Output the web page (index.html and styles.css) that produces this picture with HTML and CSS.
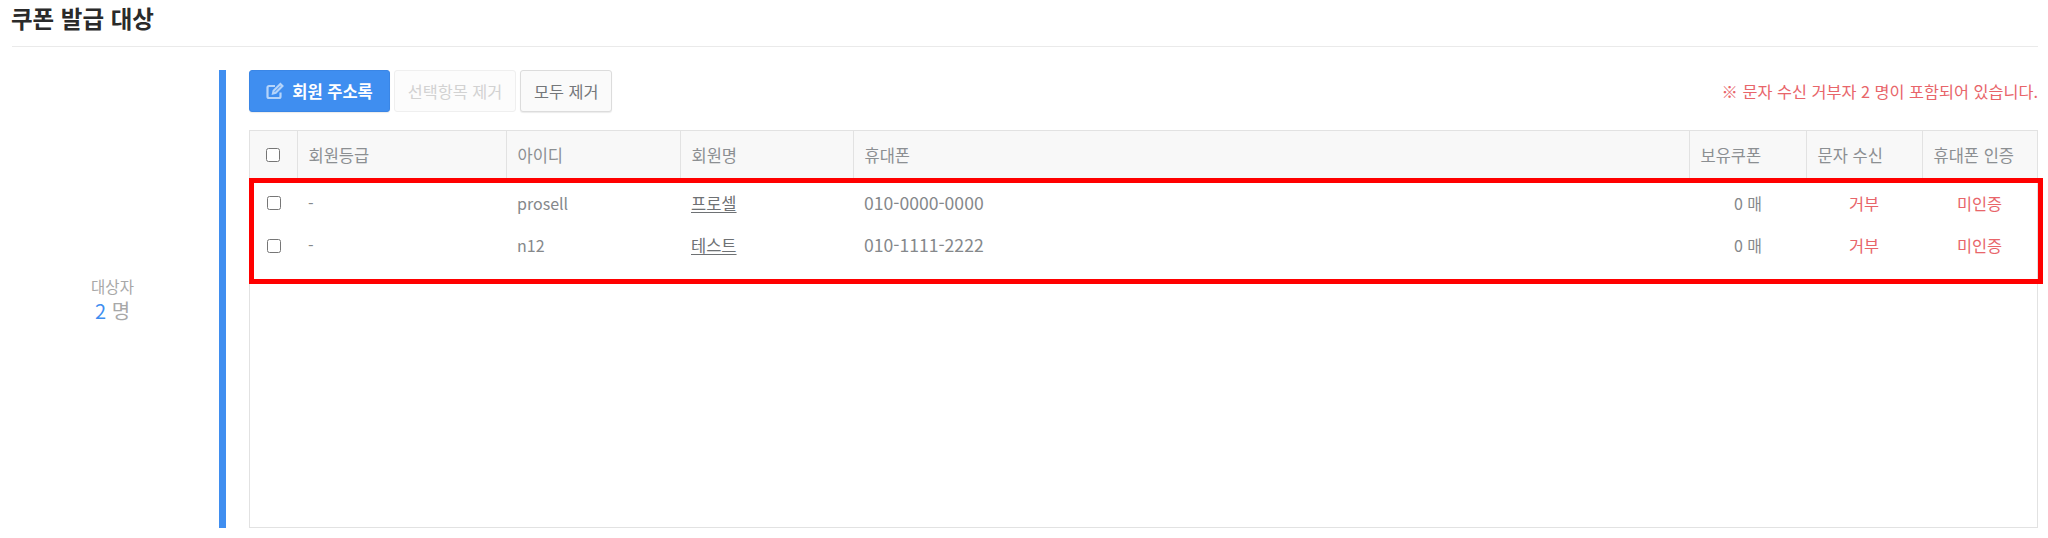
FILE: index.html
```html
<!DOCTYPE html>
<html lang="ko">
<head>
  <meta charset="UTF-8" />
  <title>쿠폰 발급 대상</title>
  <link rel="stylesheet" href="styles.css">
</head>
<body>
  <h2 class="section-title">쿠폰 발급 대상</h2>

  <section class="target">
    <div class="target-label">
      <div>대상자</div>
      <div class="target-count"><em>2</em> 명</div>
    </div>

    <div class="target-body">
      <div class="toolbar">
        <button class="btn btn-primary" type="button">
          <svg class="btn-icon" viewBox="0 0 18 18" width="18" height="18" fill="none" stroke="currentColor" stroke-width="2.2">
            <path d="M14.5 10.5v4a1.5 1.5 0 0 1-1.5 1.5H3a1.5 1.5 0 0 1-1.5-1.5v-9A1.5 1.5 0 0 1 3 4h6" />
            <path d="M7 11.5l.6-2.8L14.4 2l2 2-6.7 6.8z" />
          </svg>
          회원 주소록
        </button>
        <button class="btn btn-disabled" type="button">선택항목 제거</button>
        <button class="btn" type="button">모두 제거</button>
        <p class="notice">※ 문자 수신 거부자 2 명이 포함되어 있습니다.</p>
      </div>

      <div class="table-wrap">
        <table class="member-table">
          <colgroup>
            <col class="col-check" />
            <col class="col-grade" />
            <col class="col-id" />
            <col class="col-name" />
            <col />
            <col class="col-coupon" />
            <col class="col-sms" />
            <col class="col-auth" />
          </colgroup>
          <thead>
            <tr>
              <th class="check-cell"><input type="checkbox" /></th>
              <th>회원등급</th>
              <th>아이디</th>
              <th>회원명</th>
              <th>휴대폰</th>
              <th>보유쿠폰</th>
              <th>문자 수신</th>
              <th>휴대폰 인증</th>
            </tr>
          </thead>
          <tbody>
            <tr>
              <td class="check-cell"><input type="checkbox" /></td>
              <td>-</td>
              <td>prosell</td>
              <td><a href="#">프로셀</a></td>
              <td class="phone">010-0000-0000</td>
              <td class="coupon">0 매</td>
              <td class="status">거부</td>
              <td class="status">미인증</td>
            </tr>
            <tr>
              <td class="check-cell"><input type="checkbox" /></td>
              <td>-</td>
              <td>n12</td>
              <td><a href="#">테스트</a></td>
              <td class="phone">010-1111-2222</td>
              <td class="coupon">0 매</td>
              <td class="status">거부</td>
              <td class="status">미인증</td>
            </tr>
          </tbody>
        </table>
        <!-- annotation box drawn over the rows -->
        <div class="highlight"></div>
      </div>
    </div>
  </section>
</body>
</html>
```

FILE: styles.css
```css
:root {
  --accent-blue: #3f8ef0;
  --line: #e2e2e2;
  --text-gray: #85888b;
  --notice-red: #e8656a;
}

* {
  box-sizing: border-box;
  margin: 0;
  padding: 0;
}

body {
  font-family: "Noto Sans CJK KR", "Noto Sans", sans-serif;
  font-size: 16px;
  color: var(--text-gray);
  background-color: #fff;
  height: 538px;
  overflow: hidden;
  padding: 0 10px 0 12px;
}

.section-title {
  height: 47px;
  padding-top: 2px;
  text-indent: -1px;
  font-size: 23.5px;
  line-height: 32px;
  font-weight: 700;
  color: #2a2a2a;
  border-bottom: 1px solid #eaeaea;
}

.target {
  display: flex;
  height: 458px;
  margin-top: 23px;
}

/* Left column with the count */
.target-label {
  width: 207px;
  display: flex;
  flex-direction: column;
  justify-content: center;
  align-items: center;
  padding: 2px 6px 0 0;
  color: #a8a8a8;
  font-size: 15.5px;
  line-height: 22px;
}

.target-count {
  font-size: 20px;
  line-height: 28px;
}

.target-count em {
  font-style: normal;
  color: var(--accent-blue);
}

.target-body {
  flex: 1;
  display: flex;
  flex-direction: column;
  border-left: 7px solid var(--accent-blue);
  padding-left: 23px;
}

.toolbar {
  display: flex;
  align-items: center;
  gap: 4px;
  height: 42px;
  margin-bottom: 18px;
}

.btn {
  height: 42px;
  padding: 0 13px;
  font-family: inherit;
  font-size: 16.3px;
  color: #74777a;
  background-color: #fafafa;
  border: 1px solid #dcdcdc;
  border-radius: 3px;
  box-shadow: 0 1px 1px rgba(0, 0, 0, 0.08);
  display: flex;
  align-items: center;
  gap: 8px;
}

.btn-primary {
  width: 141px;
  padding: 0;
  justify-content: center;
  color: #fff;
  font-weight: 700;
  font-size: 16.5px;
  background-color: var(--accent-blue);
  border-color: #3a86e6;
}

.btn-icon {
  color: #b5d4fa;
}

.btn-disabled {
  width: 122px;
  padding: 0;
  justify-content: center;
  color: #d2d2d2;
  background-color: #fcfcfc;
  border-color: #efefef;
  box-shadow: none;
}

.notice {
  margin-left: auto;
  font-size: 16.3px;
  color: var(--notice-red);
}

.table-wrap {
  position: relative;
  flex: 1;
  border: 1px solid var(--line);
}

.member-table {
  width: 100%;
  border-collapse: collapse;
  table-layout: fixed;
}

.col-check { width: 47px; }
.col-grade { width: 209px; }
.col-id { width: 174px; }
.col-name { width: 173px; }
.col-coupon { width: 117px; }
.col-sms { width: 116px; }
.col-auth { width: 115px; }

.member-table th {
  height: 47px;
  padding: 0 11px;
  text-align: left;
  font-weight: 400;
  font-size: 16.5px;
  white-space: nowrap;
  color: #8c8f92;
  background-color: #f8f8f8;
  border-left: 1px solid var(--line);
}

.member-table th:first-child {
  border-left: 0;
}

.member-table td {
  height: 41px;
  padding: 0 11px;
  font-size: 16px;
}

.member-table tbody tr:first-child td {
  padding-top: 3px;
  height: 46px;
}

.member-table a {
  color: #6e7174;
  font-size: 16.5px;
  text-decoration: underline;
  text-underline-offset: 2px;
}

.member-table td.check-cell {
  padding: 2px 0 0;
}

.member-table th.check-cell {
  padding: 0;
}

.member-table input[type="checkbox"] {
  display: block;
  width: 14px;
  height: 14px;
  margin: 0 auto;
}

.member-table .phone {
  font-size: 17.6px;
}

.member-table .coupon {
  padding-right: 44px;
  text-align: right;
}

.member-table .status {
  text-align: center;
  font-size: 16.4px;
  color: var(--notice-red);
}

.highlight {
  position: absolute;
  top: 47px;
  left: -1px;
  right: -6px;
  height: 106px;
  border: 5px solid #f00;
  pointer-events: none;
}
```
